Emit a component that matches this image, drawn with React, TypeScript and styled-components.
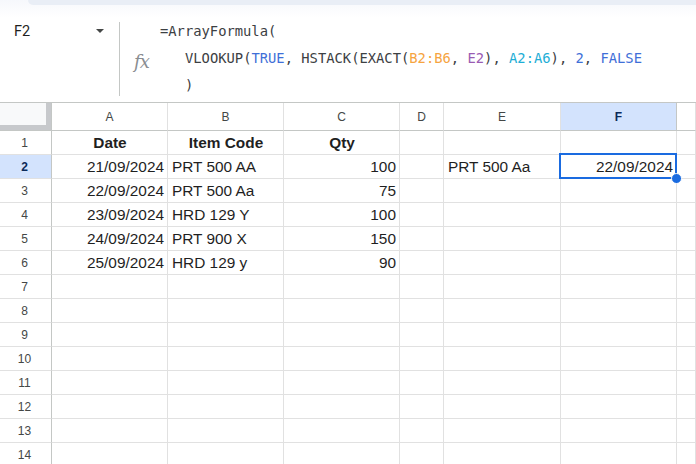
import React from "react";
import styled, { createGlobalStyle } from "styled-components";

const Global = createGlobalStyle`
  html, body { margin: 0; padding: 0; background: #ffffff; }
  body { font-family: "Liberation Sans", Arial, sans-serif; overflow: hidden; }
  * { box-sizing: border-box; }
`;

const Page = styled.div`
  width: 696px;
  height: 464px;
  overflow: hidden;
  display: flex;
  flex-direction: column;
  background: #fff;
`;

const TopStrip = styled.div`
  height: 18px;
  flex: none;
  background: linear-gradient(#f6f8fc, #ffffff);
  padding-left: 28px;
`;

const TopPill = styled.div`
  height: 5px;
  background: #e9eef6;
  border-bottom-left-radius: 16px;
`;

const FormulaBar = styled.div`
  height: 84px;
  flex: none;
  display: flex;
  align-items: stretch;
`;

const NameBox = styled.div`
  width: 120px;
  flex: none;
  display: flex;
  align-items: flex-start;
  justify-content: space-between;
  padding: 0 15px 0 14px;
  border-right: 1px solid #c4c7c5;
  margin: 4px 0 6px 0;
  font-family: "Roboto", "Liberation Sans", sans-serif;
  font-size: 14.5px;
  color: #1f1f1f;
  line-height: 19px;
`;

const NameText = styled.span`
  padding-top: 0px;
`;

const Caret = styled.span`
  width: 0;
  height: 0;
  margin-top: 7px;
  border-left: 4.5px solid transparent;
  border-right: 4.5px solid transparent;
  border-top: 4.5px solid #444746;
`;

const FxBox = styled.div`
  width: 40px;
  flex: none;
  display: flex;
  align-items: center;
  justify-content: center;
  padding: 2px 0 0 3px;
  font-family: "DejaVu Serif", "Liberation Serif", serif;
  font-style: italic;
  font-size: 18px;
  color: #8a8d91;
  letter-spacing: -1px;
`;

const FormulaText = styled.div`
  flex: 1;
  font-family: "DejaVu Sans Mono", "Liberation Mono", monospace;
  font-size: 13.8px;
  line-height: 27px;
  color: #3c4043;
  white-space: pre;
`;

const Line = styled.div<{ $indent?: boolean }>`
  padding-left: ${(p) => (p.$indent ? "25px" : "0")};
`;

const Tok = styled.span<{ $c: string }>`
  color: ${(p) => p.$c};
`;

const Grid = styled.div`
  display: grid;
  grid-template-columns: 52px 116px 116px 116px 44px 117px 116px 1fr;
  grid-template-rows: 28px;
  grid-auto-rows: 24px;
  border-top: 1px solid #c4c7c5;
  flex: none;
`;

const Corner = styled.div`
  background: #f8f9fa;
  border-right: 1px solid #c4c7c5;
  border-bottom: 1px solid #c4c7c5;
  box-shadow: inset -5px -5px 0 #c7c9cc;
`;

const ColHead = styled.div<{ $sel?: boolean }>`
  display: flex;
  align-items: center;
  justify-content: center;
  border-right: 1px solid ${(p) => (p.$sel ? "#c4c7c5" : "#e1e1e1")};
  border-bottom: 1px solid #c4c7c5;
  background: ${(p) => (p.$sel ? "#d3e3fd" : "#fff")};
  color: ${(p) => (p.$sel ? "#0b2a5a" : "#444746")};
  font-size: 12px;
  font-weight: ${(p) => (p.$sel ? 700 : 400)};
  padding-top: 1px;
`;

const RowHead = styled.div<{ $sel?: boolean }>`
  display: flex;
  align-items: center;
  justify-content: center;
  border-right: 1px solid #c4c7c5;
  border-bottom: 1px solid #e1e1e1;
  background: ${(p) => (p.$sel ? "#d3e3fd" : "#fff")};
  color: ${(p) => (p.$sel ? "#0b2a5a" : "#444746")};
  font-size: 12px;
  font-weight: ${(p) => (p.$sel ? 700 : 400)};
  padding-right: 2px;
`;

const Cell = styled.div<{ $align?: "left" | "right" | "center"; $bold?: boolean }>`
  position: relative;
  display: flex;
  align-items: center;
  justify-content: ${(p) =>
    p.$align === "right" ? "flex-end" : p.$align === "center" ? "center" : "flex-start"};
  padding: 0 3px 0 4px;
  border-right: 1px solid #e1e1e1;
  border-bottom: 1px solid #e1e1e1;
  font-size: 15.4px;
  font-weight: ${(p) => (p.$bold ? 700 : 400)};
  color: #1f1f1f;
  white-space: nowrap;
`;

const Selection = styled.div`
  position: absolute;
  z-index: 5;
  left: -2px;
  top: -2px;
  right: -1px;
  bottom: -1px;
  border: 2px solid #1a6be0;
  pointer-events: none;
`;

const Handle = styled.div`
  position: absolute;
  right: -7px;
  bottom: -7px;
  width: 11px;
  height: 11px;
  border-radius: 50%;
  background: #1a6be0;
  border: 1px solid #fff;
`;

type Align = "left" | "right" | "center";
type CellData = { v: string; a?: Align; b?: boolean };

const cols = ["A", "B", "C", "D", "E", "F", "G"];

const data: Record<number, Record<string, CellData>> = {
  1: {
    A: { v: "Date", a: "center", b: true },
    B: { v: "Item Code", a: "center", b: true },
    C: { v: "Qty", a: "center", b: true },
  },
  2: {
    A: { v: "21/09/2024", a: "right" },
    B: { v: "PRT 500 AA" },
    C: { v: "100", a: "right" },
    E: { v: "PRT 500 Aa" },
    F: { v: "22/09/2024", a: "right" },
  },
  3: {
    A: { v: "22/09/2024", a: "right" },
    B: { v: "PRT 500 Aa" },
    C: { v: "75", a: "right" },
  },
  4: {
    A: { v: "23/09/2024", a: "right" },
    B: { v: "HRD 129 Y" },
    C: { v: "100", a: "right" },
  },
  5: {
    A: { v: "24/09/2024", a: "right" },
    B: { v: "PRT 900 X" },
    C: { v: "150", a: "right" },
  },
  6: {
    A: { v: "25/09/2024", a: "right" },
    B: { v: "HRD 129 y" },
    C: { v: "90", a: "right" },
  },
};

const rows = Array.from({ length: 14 }, (_, i) => i + 1);

const ORANGE = "#f6a43f";
const PURPLE = "#9a5bb3";
const CYAN = "#1eaed6";
const BLUE = "#3f6fd8";

export default function App() {
  return (
    <Page>
      <Global />
      <TopStrip>
        <TopPill />
      </TopStrip>
      <FormulaBar>
        <NameBox>
          <NameText>F2</NameText>
          <Caret />
        </NameBox>
        <FxBox>fx</FxBox>
        <FormulaText>
          <Line>=ArrayFormula(</Line>
          <Line $indent>
            VLOOKUP(<Tok $c={BLUE}>TRUE</Tok>, HSTACK(EXACT(
            <Tok $c={ORANGE}>B2:B6</Tok>, <Tok $c={PURPLE}>E2</Tok>),{" "}
            <Tok $c={CYAN}>A2:A6</Tok>), <Tok $c={BLUE}>2</Tok>,{" "}
            <Tok $c={BLUE}>FALSE</Tok>
          </Line>
          <Line $indent>)</Line>
        </FormulaText>
      </FormulaBar>
      <Grid>
        <Corner />
        {cols.map((c) => (
          <ColHead key={c} $sel={c === "F"}>
            {c === "G" ? "" : c}
          </ColHead>
        ))}
        {rows.map((r) => (
          <React.Fragment key={r}>
            <RowHead $sel={r === 2}>{r}</RowHead>
            {cols.map((c) => {
              const d = data[r]?.[c];
              const sel = r === 2 && c === "F";
              return (
                <Cell key={c} $align={d?.a} $bold={d?.b}>
                  {d?.v}
                  {sel && (
                    <Selection>
                      <Handle />
                    </Selection>
                  )}
                </Cell>
              );
            })}
          </React.Fragment>
        ))}
      </Grid>
    </Page>
  );
}
